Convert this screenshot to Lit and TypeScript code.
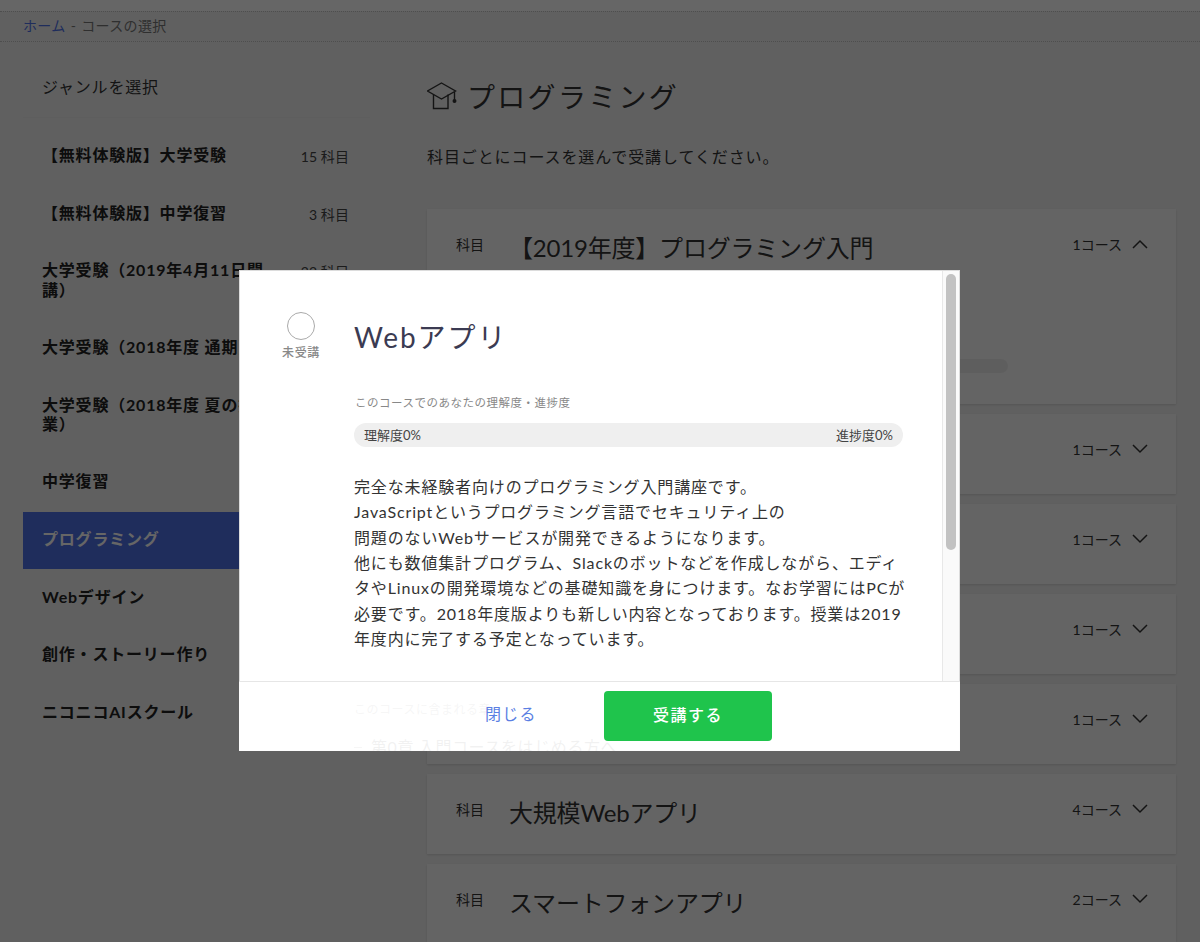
import { LitElement, html, css, svg } from "lit";
import { customElement } from "lit/decorators.js";

const genres = [
  { name: "【無料体験版】大学受験", count: "15 科目" },
  { name: "【無料体験版】中学復習", count: "3 科目" },
  { name: "大学受験(2019年4月11日開講)", count: "22 科目" },
  { name: "大学受験(2018年度 通期)", count: "30 科目" },
  { name: "大学受験(2018年度 夏の授業)", count: "20 科目" },
  { name: "中学復習", count: "9 科目" },
  { name: "プログラミング", count: "8 科目", active: true },
  { name: "Webデザイン", count: "2 科目" },
  { name: "創作・ストーリー作り", count: "2 科目" },
  { name: "ニコニコAIスクール", count: "3 科目" },
];

const subjects = [
  { title: "【2019年度】プログラミング入門", count: "1コース", open: true },
  { title: "プログラミング入門", count: "1コース" },
  { title: "Webアプリ基礎", count: "1コース" },
  { title: "サーバーサイド", count: "1コース" },
  { title: "Webアプリ", count: "1コース" },
  { title: "大規模Webアプリ", count: "4コース" },
  { title: "スマートフォンアプリ", count: "2コース" },
];

const chevron = (up: boolean) => svg`<svg class="chev" viewBox="0 0 16 10" width="16" height="10" fill="none" stroke="currentColor" stroke-width="1.5"><path d=${up ? "M1 9L8 2l7 7" : "M1 1l7 7 7-7"}></path></svg>`;

@customElement("app-root")
export class AppRoot extends LitElement {
  static styles = css`
    :host {
      display: block;
      position: relative;
      height: 942px;
      overflow: hidden;
      background: #f0f0f0;
      color: #222;
      font-family: "Lato", "Noto Sans CJK JP", sans-serif;
    }
    .strip { height: 11px; background: #ffffff; }
    .crumbs {
      height: 26px;
      padding: 0 0 3px 23px;
      border-top: 1px dotted #c4c4c4;
      border-bottom: 1px dotted #c4c4c4;
      display: flex;
      align-items: center;
      gap: 5px;
      font-size: 14px;
      letter-spacing: 0.35px;
      color: #777;
    }
    .crumbs a { color: #4e71e6; }
    .content { display: flex; align-items: flex-start; }
    .side { width: 347px; margin-left: 23px; flex: none; }
    .side-head {
      height: 76px;
      box-sizing: border-box;
      padding: 33px 0 0 19px;
      font-size: 16px;
      line-height: 24px;
      letter-spacing: 0.8px;
      color: #333;
      border-bottom: 1px solid #ebebeb;
    }
    .genres { margin-top: 10px; }
    .genre {
      display: flex;
      align-items: flex-start;
      justify-content: space-between;
      padding: 17.2px 21px 21.2px 19px;
      font-size: 16px;
      line-height: 19.2px;
      font-weight: 700;
      letter-spacing: 0.8px;
    }
    .genre .nm { width: 226px; }
    .genre .ct { margin-top: 4px; font-size: 14px; line-height: 15px; font-weight: 400; letter-spacing: 0.1px; color: #444; white-space: nowrap; }
    .genre.active { background: #4e71e6; color: #fff; }
    .main { width: 749px; margin-left: 57px; flex: none; }
    .h1 {
      display: flex;
      align-items: center;
      gap: 10px;
      margin: 38px 0 0;
      height: 32px;
      font-size: 28px;
      font-weight: 400;
      letter-spacing: 2.3px;
      color: #333;
    }
    .lead { margin: 34px 0 0; font-size: 16px; line-height: 22px; letter-spacing: 0.9px; color: #333; }
    .cards { display: flex; flex-direction: column; gap: 10px; margin-top: 41px; }
    .card { background: #fafafa; box-shadow: 0 1px 2px rgba(0,0,0,.12); min-height: 80px; box-sizing: border-box; }
    .card.open { height: 195px; }
    .card-row { display: flex; align-items: flex-start; padding: 26px 28px 0 29px; }
    .kamoku { width: 53px; font-size: 14px; line-height: 20px; color: #333; flex: none; }
    .ttl { flex: 1; font-size: 24px; line-height: 36px; letter-spacing: -0.2px; color: #333; margin-top: -5px; white-space: nowrap; }
    .cnt { font-size: 14px; line-height: 20px; color: #333; display: flex; align-items: center; gap: 10px; }
    .chev { display: block; margin-top: -2px; }
    .bar { margin: 93px 168px 0 82px; height: 14px; border-radius: 7px; background: #ececec; }
    .overlay {
      position: absolute;
      inset: 0;
      background: rgba(0, 0, 0, 0.6);
      padding: 270px 240px 0 239px;
      box-sizing: border-box;
    }
    .modal {
      position: relative;
      width: 721px;
      height: 481px;
      background: #fff;
      overflow: hidden;
      color: #333;
      box-shadow: inset 0 0 0 1px #dcdcdc;
    }
    .track {
      position: absolute;
      top: 1px; right: 1px; bottom: 70px;
      width: 17px;
      box-sizing: border-box;
      background: #fafafa;
      border-left: 1px solid #e8e8e8;
    }
    .thumb { width: 10px; height: 276px; margin: 3px 0 0 3px; border-radius: 5px; background: #c2c2c2; }
    .body { padding: 0 0 0 115px; width: 664px; }
    .status {
      position: absolute;
      left: 38px; top: 42px;
      width: 48px;
      display: flex;
      flex-direction: column;
      align-items: center;
      gap: 5px;
      font-size: 12px;
      line-height: 16px;
      letter-spacing: 0.7px;
      color: #888;
      font-weight: 500;
    }
    .circle { width: 28px; height: 28px; border-radius: 50%; border: 1.5px solid #aaa; box-sizing: border-box; }
    h2 {
      margin: 0;
      padding-top: 46px;
      font-size: 28px;
      line-height: 42px;
      font-weight: 400;
      letter-spacing: 1.9px;
      color: #3b3b52;
    }
    .lbl { margin-top: 37px; font-size: 11.5px; line-height: 16px; letter-spacing: 0.5px; color: #888; padding-left: 1px; }
    .prog {
      margin-top: 12px;
      height: 24px;
      width: 549px;
      border-radius: 12px;
      background: #efefef;
      display: flex;
      justify-content: space-between;
      align-items: center;
      padding: 0 10px 1px;
      box-sizing: border-box;
      font-size: 13px;
      color: #444;
    }
    .desc { margin: 27px 0 0; width: 549px; font-size: 16px; line-height: 25.35px; letter-spacing: 0.85px; color: #333; white-space: nowrap; }
    .inc { margin-top: 51px; font-size: 12px; line-height: 16px; letter-spacing: 0.5px; color: #888; }
    .ch { margin-top: 17px; display: flex; align-items: center; gap: 9px; font-size: 16px; line-height: 24px; letter-spacing: 0.6px; color: #555; }
    .ch i { width: 8px; height: 1px; background: #888; }
    .foot {
      position: absolute;
      left: 0; right: 0; bottom: 0;
      height: 70px;
      box-sizing: border-box;
      border-top: 1px solid #e6e6e6;
      background: rgba(255, 255, 255, 0.92);
      display: flex;
      align-items: center;
      padding: 0 0 2px 246px;
      gap: 67px;
    }
    .close { font-size: 16px; letter-spacing: 1.3px; color: #5b7fe3; margin-bottom: 5px; }
    .go {
      width: 168px;
      height: 50px;
      box-sizing: border-box;
      padding-bottom: 4px;
      border-radius: 4px;
      background: #1fc44c;
      color: #fff;
      display: flex;
      align-items: center;
      justify-content: center;
      font-size: 16px;
      font-weight: 500;
      letter-spacing: 1.5px;
    }
  `;

  render() {
    return html`
      <div class="strip"></div>
      <div class="crumbs"><a>ホーム</a><span>-</span><span>コースの選択</span></div>
      <div class="content">
        <aside class="side">
          <div class="side-head">ジャンルを選択</div>
          <div class="genres">
            ${genres.map(
              (g) => html`<div class="genre ${g.active ? "active" : ""}">
                <span class="nm">${g.name.replace("(", "（").replace(")", "）")}</span><span class="ct">${g.count}</span>
              </div>`
            )}
          </div>
        </aside>
        <main class="main">
          <h1 class="h1">
            <svg width="30" height="28" viewBox="0 0 30 28" fill="none" stroke="#333" stroke-width="1.4">
              <path d="M14.5 1L28.5 9 14.5 17 .5 9z"></path>
              <path d="M6.5 12.5V26.5H21V12.5"></path>
              <path d="M27.5 10V18"></path>
              <circle cx="27.5" cy="19" r="1.3" fill="#333"></circle>
            </svg>
            プログラミング
          </h1>
          <p class="lead">科目ごとにコースを選んで受講してください。</p>
          <div class="cards">
            ${subjects.map(
              (s) => html`<section class="card ${s.open ? "open" : ""}">
                <div class="card-row">
                  <span class="kamoku">科目</span>
                  <span class="ttl">${s.title}</span>
                  <span class="cnt">${s.count}${chevron(!!s.open)}</span>
                </div>
                ${s.open ? html`<div class="bar"></div>` : ""}
              </section>`
            )}
          </div>
        </main>
      </div>
      <div class="overlay">
        <div class="modal">
          <div class="status"><span class="circle"></span><span>未受講</span></div>
          <div class="body">
            <h2>Webアプリ</h2>
            <div class="lbl">このコースでのあなたの理解度・進捗度</div>
            <div class="prog"><span>理解度0%</span><span>進捗度0%</span></div>
            <p class="desc">完全な未経験者向けのプログラミング入門講座です。<br />JavaScriptというプログラミング言語でセキュリティ上の<br />問題のないWebサービスが開発できるようになります。<br />他にも数値集計プログラム、Slackのボットなどを作成しながら、エディ<br />タやLinuxの開発環境などの基礎知識を身につけます。なお学習にはPCが<br />必要です。2018年度版よりも新しい内容となっております。授業は2019<br />年度内に完了する予定となっています。</p>
            <div class="inc">このコースに含まれる章</div>
            <div class="ch"><i></i>第0章 入門コースをはじめる方へ</div>
          </div>
          <div class="track"><div class="thumb"></div></div>
          <div class="foot"><span class="close">閉じる</span><span class="go">受講する</span></div>
        </div>
      </div>
    `;
  }
}
